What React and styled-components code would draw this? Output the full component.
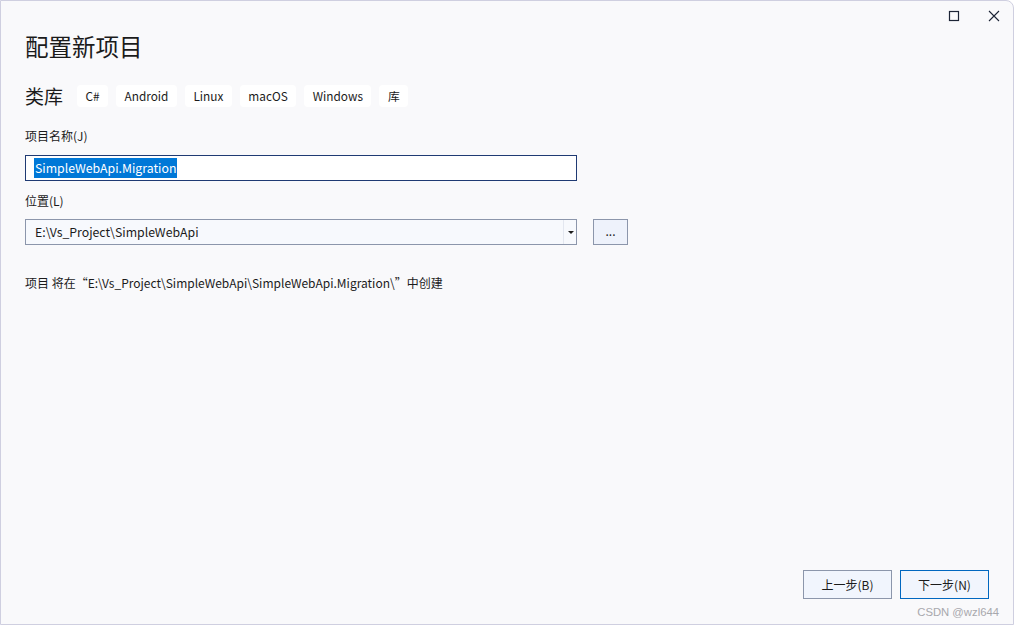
import React from "react";
import styled, { createGlobalStyle } from "styled-components";

const Global = createGlobalStyle`
  html, body { margin: 0; padding: 0; background: #ffffff; }
  body { font-family: "Noto Sans CJK SC", "Noto Sans", sans-serif; color: #1b1b1b; }
  * { box-sizing: border-box; }
`;

const Window = styled.div`
  position: relative;
  width: 1014px;
  height: 625px;
  background: #f9f9fb;
  border: 1px solid #cfcfe0;
  border-radius: 0 8px 0 0;
  display: flex;
  flex-direction: column;
  overflow: hidden;
`;

const Caption = styled.div`
  height: 29px;
  display: flex;
  justify-content: flex-end;
  align-items: center;
`;

const CaptionButton = styled.button`
  width: ${(p) => p.$w}px;
  height: 29px;
  border: none;
  background: transparent;
  padding: 0;
  display: flex;
  align-items: center;
  justify-content: center;
  color: #1c2436;
`;

const Body = styled.div`
  flex: 1;
  display: flex;
  flex-direction: column;
  padding: 0 24px 25px 24px;
`;

const Title = styled.h1`
  margin: 0;
  font-size: 23.5px;
  line-height: 32px;
  font-weight: 400;
  color: #1b1b1b;
`;

const TagRow = styled.div`
  margin-top: 22px;
  height: 24px;
  display: flex;
  align-items: center;
  gap: 8px;
`;

const Kind = styled.span`
  font-size: 19px;
  line-height: 24px;
  margin-right: 6px;
  color: #1b1b1b;
`;

const Tag = styled.span`
  height: 22px;
  padding: 0 8.5px;
  background: #ffffff;
  border-radius: 4px;
  font-size: 11.8px;
  line-height: 22px;
  color: #1b1b1b;
`;

const Label = styled.div`
  margin-top: ${(p) => p.$top}px;
  font-size: 12px;
  line-height: 16px;
  color: #1b1b1b;
`;

const Field = styled.div`
  margin-top: ${(p) => p.$top}px;
  display: flex;
  align-items: center;
  gap: 16px;
`;

const TextBox = styled.div`
  width: 552px;
  height: 26px;
  border: 1px solid #1f3a73;
  background: #ffffff;
  padding: 0 0 0 8px;
  display: flex;
  align-items: center;
`;

const Selected = styled.span`
  background: #0078d7;
  color: #ffffff;
  font-size: 12.3px;
  line-height: 20px;
  padding: 0 1px;
`;

const SelectBox = styled.div`
  width: 552px;
  height: 26px;
  border: 1px solid #8c96ab;
  background: #f7f9fd;
  display: flex;
  align-items: center;
`;

const SelectText = styled.span`
  flex: 1;
  padding-left: 9px;
  font-size: 12.3px;
  color: #1b1b1b;
`;

const Arrow = styled.span`
  width: 13px;
  height: 24px;
  border-left: 1px solid #e3e7f0;
  display: flex;
  align-items: center;
  justify-content: center;
  &::after {
    content: "";
    border-left: 3px solid transparent;
    border-right: 3px solid transparent;
    border-top: 3px solid #1b1b1b;
    margin-left: 1px;
  }
`;

const BrowseButton = styled.button`
  width: 35px;
  height: 26px;
  border: 1px solid #8c96ab;
  background: #eef2fb;
  font-family: inherit;
  font-size: 12px;
  color: #1b1b1b;
  padding: 0 0 4px;
  display: flex;
  align-items: center;
  justify-content: center;
`;

const Info = styled.div`
  margin-top: 30px;
  font-size: 12px;
  line-height: 16px;
  color: #1b1b1b;
`;

const Footer = styled.div`
  margin-top: auto;
  display: flex;
  justify-content: flex-end;
  gap: 8px;
`;

const NavButton = styled.button`
  width: 89px;
  height: 29px;
  border: 1px solid ${(p) => (p.$primary ? "#0067c0" : "#8c96ab")};
  background: #f1f5fd;
  font-family: inherit;
  font-size: 12px;
  color: #1b1b1b;
  padding: 0;
`;

const Watermark = styled.span`
  position: absolute;
  right: 14px;
  bottom: 6px;
  font-family: "Liberation Sans", Arial, sans-serif;
  font-size: 11.3px;
  color: #a8a8ad;
`;

export default function App() {
  return (
    <>
      <Global />
      <Window>
        <Caption>
          <CaptionButton $w={43} aria-label="maximize">
            <svg width="12" height="12" viewBox="0 0 12 12">
              <rect x="1.5" y="1.5" width="9" height="9" fill="none" stroke="currentColor" strokeWidth="1.2" />
            </svg>
          </CaptionButton>
          <CaptionButton $w={38} aria-label="close">
            <svg width="12" height="12" viewBox="0 0 12 12">
              <path d="M1 1 L11 11 M11 1 L1 11" stroke="currentColor" strokeWidth="1.1" />
            </svg>
          </CaptionButton>
        </Caption>
        <Body>
          <Title>配置新项目</Title>
          <TagRow>
            <Kind>类库</Kind>
            {["C#", "Android", "Linux", "macOS", "Windows", "库"].map((t) => (
              <Tag key={t}>{t}</Tag>
            ))}
          </TagRow>
          <Label $top={20}>项目名称(J)</Label>
          <Field $top={11}>
            <TextBox>
              <Selected>SimpleWebApi.Migration</Selected>
            </TextBox>
          </Field>
          <Label $top={12}>位置(L)</Label>
          <Field $top={10}>
            <SelectBox>
              <SelectText>E:\Vs_Project\SimpleWebApi</SelectText>
              <Arrow />
            </SelectBox>
            <BrowseButton>...</BrowseButton>
          </Field>
          <Info>项目 将在“E:\Vs_Project\SimpleWebApi\SimpleWebApi.Migration\”中创建</Info>
          <Footer>
            <NavButton>上一步(B)</NavButton>
            <NavButton $primary>下一步(N)</NavButton>
          </Footer>
        </Body>
        <Watermark>CSDN @wzl644</Watermark>
      </Window>
    </>
  );
}
